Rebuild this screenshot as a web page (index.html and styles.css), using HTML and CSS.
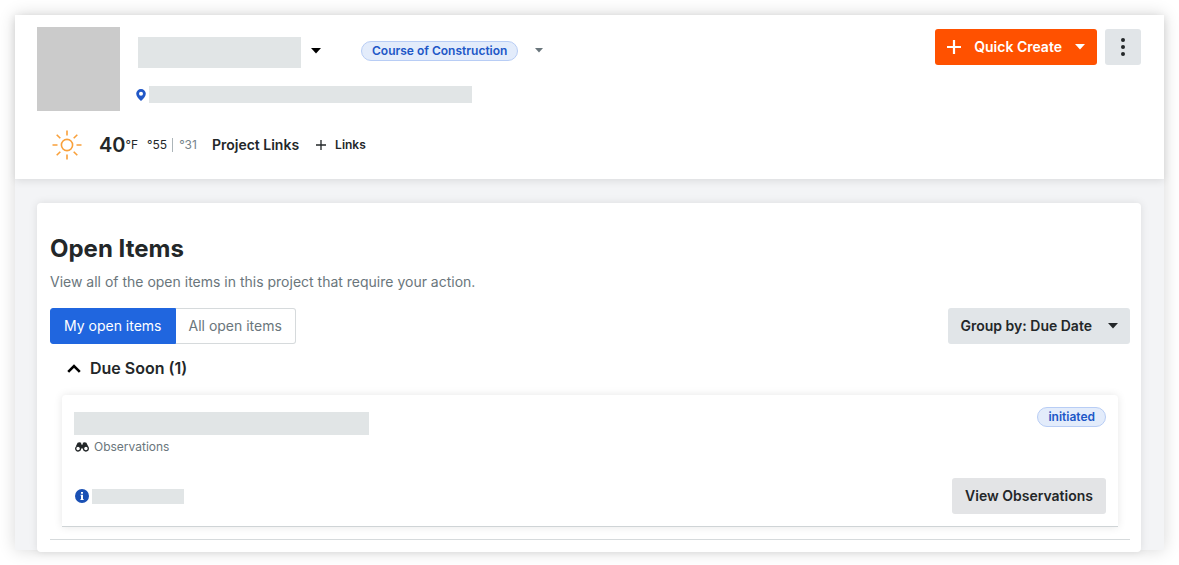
FILE: index.html
```
<!DOCTYPE html>
<html lang="en">
<head>
  <meta charset="utf-8">
  <title>Project Home</title>
  <link rel="stylesheet" href="styles.css">
</head>
<body>
  <div class="page">
    <header class="project-header">
      <div class="header-top">
        <div class="project-photo"></div>
        <div class="project-info">
          <div class="name-row">
            <div class="placeholder project-name"></div>
            <button class="icon-btn name-toggle" aria-label="Switch project">
              <svg width="10" height="6" viewBox="0 0 10 6"><path d="M0 0h10L5 5.6z" fill="#000"/></svg>
            </button>
            <span class="pill">Course of Construction</span>
            <button class="icon-btn stage-toggle" aria-label="Change stage">
              <svg width="8" height="5" viewBox="0 0 8 5"><path d="M0 0h8L4 4.4z" fill="#6a767c"/></svg>
            </button>
          </div>
          <div class="address-row">
            <svg width="10" height="12" viewBox="0 0 10 12"><path fill="#2057c7" fill-rule="evenodd" d="M5 0a4.8 4.8 0 0 1 4.8 4.8C9.8 7.6 7 10 5 12 3 10 .2 7.6.2 4.8A4.8 4.8 0 0 1 5 0zm0 2.8a2 2 0 1 0 0 4 2 2 0 0 0 0-4z"/></svg>
            <div class="placeholder project-address"></div>
          </div>
        </div>
        <div class="header-actions">
          <button class="btn btn-primary">
            <svg width="14" height="14" viewBox="0 0 14 14"><path d="M7 0v14M0 7h14" stroke="#fff" stroke-width="2.2"/></svg>
            <span>Quick Create</span>
            <svg width="10" height="6" viewBox="0 0 10 6"><path d="M0 0h10L5 5.6z" fill="#fff"/></svg>
          </button>
          <button class="btn btn-more" aria-label="More">
            <svg width="4" height="18" viewBox="0 0 4 18" fill="#232729"><circle cx="2" cy="2" r="2"/><circle cx="2" cy="9" r="2"/><circle cx="2" cy="16" r="2"/></svg>
          </button>
        </div>
      </div>
      <div class="header-bottom">
        <svg class="sun" width="30" height="30" viewBox="0 0 30 30" fill="none" stroke="#f9a03a" stroke-width="1.6"><circle cx="15" cy="15" r="5.6"/><path d="M15 .5v5M15 24.5v5M.5 15h5M24.5 15h5M4.7 4.7l3.6 3.6M21.7 21.7l3.6 3.6M4.7 25.3l3.6-3.6M21.7 8.3l3.6-3.6"/></svg>
        <span class="temp">40</span>
        <span class="unit">°F</span>
        <span class="high">°55</span>
        <span class="low">°31</span>
        <span class="links-title">Project Links</span>
        <button class="icon-btn add-link">
          <svg width="10" height="10" viewBox="0 0 10 10"><path d="M5 0v10M0 5h10" stroke="#232729" stroke-width="1.3"/></svg>
          Links
        </button>
      </div>
    </header>

    <main class="content">
      <section class="card">
        <h1>Open Items</h1>
        <p class="subtitle">View all of the open items in this project that require your action.</p>
        <div class="toolbar">
          <div class="segmented">
            <button class="segment active">My open items</button>
            <button class="segment">All open items</button>
          </div>
          <button class="btn btn-group">
            <span>Group by: Due Date</span>
            <svg width="10" height="6" viewBox="0 0 10 6"><path d="M0 0h10L5 5.6z" fill="#232729"/></svg>
          </button>
        </div>

        <h2>
          <button class="icon-btn group-toggle">
            <svg width="14" height="9" viewBox="0 0 14 9"><path d="M1.2 7.8L7 2l5.8 5.8" fill="none" stroke="#000" stroke-width="2.6"/></svg>
            Due Soon (1)
          </button>
        </h2>

        <article class="item">
          <div class="item-row">
            <div>
              <div class="placeholder item-title"></div>
              <div class="item-type">
                <svg width="14" height="10" viewBox="0 0 14 10"><g fill="none" stroke="#232729" stroke-width="1.3"><circle cx="3.1" cy="6.6" r="2.4"/><circle cx="10.9" cy="6.6" r="2.4"/></g><path fill="#232729" d="M2.6.8Q4.3-.4 6.2.8V2.600h1.600V.8q1.900-1.200 3.600 0l1.700 3.500q-3.600-1-4.600 2.300h-3Q4.500 3.300.9 4.300z"/></svg>
                Observations
              </div>
            </div>
            <span class="pill">initiated</span>
          </div>
          <div class="item-row item-footer">
            <div class="item-info">
              <svg width="14" height="14" viewBox="0 0 14 14"><circle cx="7" cy="7" r="7" fill="#1a50b4"/><path d="M6 3h2v1.8H6zM5.600 5.800H8V10h.6v1H5.500v-1H6V6.800h-.4z" fill="#fff"/></svg>
              <div class="placeholder item-due"></div>
            </div>
            <button class="btn btn-view">View Observations</button>
          </div>
        </article>
      </section>
    </main>
  </div>
</body>
</html>
```
FILE: styles.css
```
* {
  box-sizing: border-box;
}

body {
  margin: 0;
  padding: 15px;
  font-family: Inter, "Liberation Sans", sans-serif;
  font-size: 14px;
  line-height: 20px;
  color: #232729;
  background: #fff;
}

svg {
  display: block;
  flex: none;
}

button {
  font: inherit;
  color: inherit;
  cursor: pointer;
}

.page {
  display: flow-root;
  background: #f3f4f6;
  box-shadow: 0 0 16px rgba(0, 0, 0, .16);
}

.placeholder {
  background: #e1e5e6;
}

/* header */
.project-header {
  position: relative;
  padding: 12px 23px 18px 22px;
  background: #fff;
  box-shadow: 0 2px 8px rgba(0, 0, 0, .1);
}

.header-top {
  display: flex;
  align-items: flex-start;
}

.project-photo {
  width: 83px;
  height: 84px;
  background: #cbcbcb;
}

.project-info {
  padding: 10px 0 0 16px;
}

.name-row {
  display: flex;
  align-items: center;
  padding-left: 2px;
}

.project-name {
  width: 163px;
  height: 31px;
}

.icon-btn {
  display: flex;
  align-items: center;
  padding: 0;
  border: none;
  background: none;
}

.name-toggle {
  margin: 0 40px 4px 10px;
}

.stage-toggle {
  margin: 0 0 4px 17px;
}

.pill {
  padding: 0 10px;
  border: 1px solid #b8cdf5;
  border-radius: 10px;
  font-size: 12px;
  font-weight: 600;
  line-height: 18px;
  color: #2057c7;
  background: #e3ecfb;
}

.name-row .pill {
  margin-bottom: 4px;
}

.address-row {
  display: flex;
  align-items: center;
  gap: 3px;
  margin-top: 18px;
}

.project-address {
  width: 323px;
  height: 17px;
}

.header-actions {
  display: flex;
  gap: 8px;
  margin: 2px 0 0 auto;
}

.btn {
  display: flex;
  align-items: center;
  height: 36px;
  padding: 0 12px;
  border: none;
  border-radius: 3px;
  font-weight: 600;
  background: #e1e5e8;
}

.btn-primary {
  gap: 13px;
  color: #fff;
  background: #ff5100;
}

.btn-more {
  width: 36px;
  justify-content: center;
}

.header-bottom {
  display: flex;
  align-items: center;
  height: 32px;
  margin-top: 18px;
  padding-left: 15px;
  font-size: 12px;
}

.temp {
  margin-left: 17px;
  font-size: 20px;
  font-weight: 600;
}

.high {
  margin-left: 9px;
  padding-right: 5px;
  border-right: 1px solid #acb5b9;
  line-height: 14px;
}

.low {
  padding-left: 6px;
  color: #75838a;
}

.links-title {
  margin-left: 15px;
  font-size: 14px;
  font-weight: 600;
}

.add-link {
  gap: 9px;
  margin-left: 17px;
  font-weight: 600;
}

/* open items */
.content {
  padding: 24px 23px 0 22px;
}

.card {
  margin-bottom: -2px;
  padding: 28px 11px 12px 13px;
  border-radius: 4px;
  background: #fff;
  box-shadow: 0 0 8px rgba(0, 0, 0, .1);
}

h1 {
  margin: 0;
  font-size: 24px;
  font-weight: 700;
  line-height: 36px;
}

.subtitle {
  margin: 5px 0 16px;
  color: #6a767c;
}

.toolbar {
  display: flex;
  justify-content: space-between;
}

.segmented {
  display: flex;
}

.segment {
  height: 36px;
  padding: 0 13px;
  border: 1px solid #d6dadc;
  border-left: none;
  border-radius: 0 3px 3px 0;
  color: #6a767c;
  background: #fff;
}

.segment.active {
  border: 1px solid #2066df;
  border-radius: 3px 0 0 3px;
  color: #fff;
  background: #2066df;
}

.btn-group {
  gap: 16px;
}

h2 {
  margin: 12px 0 15px 17px;
  font-size: 16px;
  font-weight: 600;
  line-height: 24px;
}

.group-toggle {
  gap: 9px;
}

.item {
  margin: 0 12px;
  padding: 12px;
  border-bottom: 1px solid #cfd4d6;
  border-radius: 4px 4px 0 0;
  box-shadow: 0 0 8px rgba(0, 0, 0, .1);
}

.item-row {
  display: flex;
  justify-content: space-between;
  align-items: flex-start;
}

.item-title {
  width: 295px;
  height: 23px;
  margin-top: 5px;
}

.item-type {
  display: flex;
  align-items: center;
  gap: 5px;
  margin: 2px 0 0 1px;
  font-size: 12px;
  color: #6a767c;
}

.item-footer {
  align-items: center;
  margin-top: 21px;
}

.item-info {
  display: flex;
  align-items: center;
  gap: 3px;
  margin-left: 1px;
}

.item-due {
  width: 92px;
  height: 15px;
}

.btn-view {
  padding: 0 13px;
  background: #e3e4e6;
}

.card::after {
  content: "";
  display: block;
  margin-top: 12px;
  border-bottom: 1px solid #d6dadc;
}
```
